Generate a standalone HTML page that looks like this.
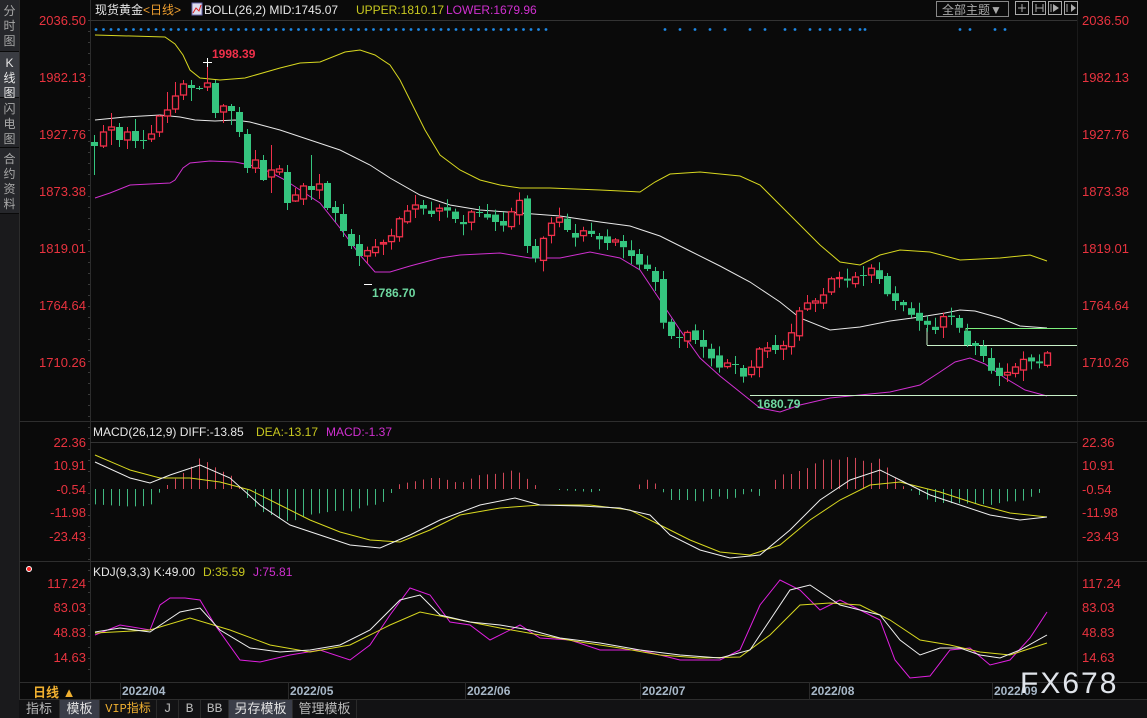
<!DOCTYPE html>
<html><head><meta charset="utf-8"><style>
*{margin:0;padding:0;box-sizing:border-box}
body{width:1147px;height:718px;background:#0a0a0a;overflow:hidden;font-family:"Liberation Sans","Noto Sans CJK SC",sans-serif;position:relative}
#side{position:absolute;left:0;top:0;width:19px;height:718px;background:#1a1a1c}
.st{position:absolute;left:0;width:19px;background:#26272b;color:#a8a8a8;font-size:12px;line-height:15px;text-align:center;border-bottom:1px solid #0a0a0a;padding-top:4px}
.st.sel{background:#3a3c42;color:#e8e8e8}
svg{position:absolute;left:0;top:0}
.tabs{position:absolute;left:19px;top:700px;height:18px;width:1128px;background:#121214;font-size:13px;color:#b8b8b8}
.tabs span{position:absolute;top:0;height:18px;line-height:18px;text-align:center;border-right:1px solid #2a2a2a;white-space:nowrap;overflow:hidden}
.tabs .hl{background:#3a3d48;color:#e0e0e0}
</style></head><body>
<div id="side">
<div class="st" style="top:0;height:52px">分<br>时<br>图</div>
<div class="st sel" style="top:52px;height:46px">K<br>线<br>图</div>
<div class="st" style="top:98px;height:50px">闪<br>电<br>图</div>
<div class="st" style="top:148px;height:66px">合<br>约<br>资<br>料</div>
</div>
<svg id="g" width="1147" height="718" xmlns="http://www.w3.org/2000/svg" font-family="Liberation Sans, Noto Sans CJK SC, sans-serif"></svg>
<div class="tabs">
<span style="left:0;width:41px">指标</span>
<span class="hl" style="left:41px;width:40px">模板</span>
<span style="left:81px;width:57px;color:#f0b030;font-size:12px;font-family:'Liberation Mono','Noto Sans CJK SC',monospace">VIP指标</span>
<span style="left:138px;width:22px;font-family:'Liberation Mono',monospace">J</span>
<span style="left:160px;width:22px;font-family:'Liberation Mono',monospace">B</span>
<span style="left:182px;width:28px;font-family:'Liberation Mono',monospace">BB</span>
<span class="hl" style="left:210px;width:64px">另存模板</span>
<span style="left:274px;width:64px">管理模板</span>
</div>
<script>
var s='';
function L(x1,y1,x2,y2,c,w,d){s+='<line x1="'+x1+'" y1="'+y1+'" x2="'+x2+'" y2="'+y2+'" stroke="'+c+'" stroke-width="'+(w||1)+'"'+(d?' stroke-dasharray="'+d+'"':'')+'/>';}
function T(x,y,t,c,sz,a,extra){s+='<text x="'+x+'" y="'+y+'" fill="'+c+'" font-size="'+(sz||12)+'"'+(a?' text-anchor="'+a+'"':'')+(extra||'')+'>'+t+'</text>';}
function P(pts,c){s+='<polyline fill="none" stroke="'+c+'" stroke-width="1" points="'+pts.map(function(p){return p.join(',')}).join(' ')+'"/>';}
L(19.5,0,19.5,700,'#2c2c2c');L(90.5,0,90.5,682,'#2c2c2c');L(1077.5,0,1077.5,682,'#1a1a1a');
[421.5,561.5,682.5,699.5].forEach(function(y){L(19,y,1147,y,'#2e2e2e');});
for(var y=20;y<680;y+=11){L(88,y+.5,90,y+.5,'#3a3a3a');}
var main=[[20,'2036.50'],[77,'1982.13'],[134,'1927.76'],[191,'1873.38'],[248,'1819.01'],[305,'1764.64'],[362,'1710.26']];
var macd=[[442,'22.36'],[465,'10.91'],[489,'-0.54'],[512,'-11.98'],[536,'-23.43']];
var kdj=[[583,'117.24'],[607,'83.03'],[632,'48.83'],[657,'14.63']];
main.concat(macd,kdj).forEach(function(m){T(86,m[0]+5,m[1],'#e8333f',13,'end');T(1082,m[0]+5,m[1],'#e8333f',13);});
L(90,20.5,1077,20.5,'#333','2,3');L(90,442.5,1077,442.5,'#333','2,3');
var dx=[];for(var x=96;x<=546;x+=7.5)dx.push(x);
[665,680,695,710,725,750,765,785,795,810,820,830,840,850,860,865,960,970,995,1005].forEach(function(x){dx.push(x)});
dx.forEach(function(x){s+='<circle cx="'+x+'" cy="29.5" r="1.4" fill="#1e88e5"/>';});
T(95,14,'现货黄金','#e8e8e8',12);T(143,14,'&lt;日线&gt;','#f0a030',12);
s+='<rect x="192" y="3" width="10" height="12" fill="#dde" stroke="#66a"/><polyline points="193,13 196,8 199,11 201,5" fill="none" stroke="#d22" stroke-width="1"/>';
T(204,14,'BOLL(26,2) MID:1745.07','#e8e8e8',12);T(356,14,'UPPER:1810.17','#c8c820',12);T(446,14,'LOWER:1679.96','#d030d0',12);
s+='<rect x="936.5" y="1.5" width="72" height="15" fill="none" stroke="#888"/>';T(942,14,'全部主题▼','#aaa',12);
[1015,1032,1048,1064].forEach(function(x){s+='<rect x="'+(x+.5)+'" y="1.5" width="13" height="13" fill="none" stroke="#aaa"/>';});
L(1018,8,1026,8,'#aaa');L(1022,4,1022,12,'#aaa');
L(1036,4,1036,12,'#aaa');L(1043,4,1043,12,'#aaa');L(1036,8,1043,8,'#aaa');
L(1051,4,1051,12,'#aaa');s+='<polygon points="1053,4 1059,8 1053,12" fill="#aaa"/>';
L(1067,4,1067,12,'#aaa');s+='<polygon points="1071,4 1076,8 1071,12" fill="#aaa"/>';
P([[95,35],[165,37],[175,44],[183,55],[190,70],[200,78],[220,80],[245,78],[280,68],[300,63],[320,62],[345,52],[360,50],[375,55],[390,65],[400,80],[410,100],[425,130],[440,155],[460,170],[480,180],[500,185],[520,188],[550,188],[600,190],[640,192],[655,182],[670,174],[700,172],[740,176],[760,185],[780,205],[800,225],[820,245],[840,262],[860,265],[880,255],[900,250],[930,252],[960,260],[1000,258],[1030,255],[1047,261]],'#d8d820');
P([[95,120],[125,117],[160,115],[180,117],[195,120],[215,121],[235,120],[250,122],[280,130],[310,140],[340,150],[370,165],[390,178],[420,195],[450,205],[480,210],[520,213],[560,216],[600,222],[630,226],[660,236],[690,251],[720,266],[750,282],[780,302],[800,318],[830,330],[860,327],[890,321],[920,317],[945,313],[960,310],[975,311],[1000,318],[1020,326],[1047,328]],'#e8e8e8');
P([[95,198],[110,193],[130,185],[170,183],[175,180],[183,168],[190,163],[210,161],[235,162],[250,165],[270,172],[285,180],[300,190],[320,203],[340,228],[360,255],[375,272],[390,272],[410,266],[440,258],[460,255],[500,253],[530,258],[560,258],[590,252],[620,258],[640,270],[660,300],[680,330],[700,358],[720,376],[740,392],[760,408],[780,412],[800,405],[830,398],[860,395],[890,392],[920,385],[940,372],[955,362],[970,358],[985,364],[1005,378],[1025,390],[1047,396]],'#d030d0');
L(966,328.5,1077,328.5,'#7ef07e');L(927,345.5,1077,345.5,'#c8f0c8');L(927,328,927,345,'#c8f0c8');L(966,328,966,345,'#7ef07e');L(750,395.5,1077,395.5,'#c8f0c8');
var G='#35c57f',R='#f0304a';
var c0=[[94,142,146,135,175],[103,146,132,125,148],[111,130,127,113,145],[119,127,140,123,147],[127,140,132,127,149],[135,131,141,119,148],[143,140,140,130,149],[151,139,134,125,142],[159,132,116,115,137],[167,116,110,92,123],[175,109,96,82,113],[183,95,84,80,100],[191,85,88,80,101],[199,88,88,86,90],[207,87,83,62,91],[215,83,113,80,118],[223,112,106,104,123],[231,106,111,104,125],[239,112,132,107,137],[247,134,168,129,173],[255,168,160,150,173],[263,160,180,155,181],[271,177,170,145,193],[279,172,169,165,175],[287,172,203,165,210],[295,201,195,188,202],[303,199,186,183,205],[311,186,190,155,200],[319,190,184,174,199],[327,183,208,181,210]];
var coarse=[[327,208],[335,215],[345,235],[355,250],[365,255],[375,248],[385,240],[395,228],[405,215],[415,205],[425,207],[435,212],[445,210],[455,218],[465,222],[475,212],[485,217],[495,220],[505,222],[515,210],[522,195],[527,245],[537,258],[547,232],[557,215],[567,228],[577,235],[587,233],[597,238],[607,240],[617,245],[627,252],[637,262],[647,265],[657,290],[665,335],[675,335],[685,335],[695,342],[705,348],[715,362],[725,366],[735,366],[745,378],[755,355],[765,350],[775,350],[785,342],[795,320],[805,305],[815,300],[825,290],[835,278],[845,282],[855,275],[865,270],[875,272],[885,292],[895,298],[905,312],[915,320],[925,322],[935,326],[945,318],[955,318],[965,340],[975,350],[985,360],[995,378],[1005,368],[1015,370],[1025,358],[1035,362],[1047,357]];
function itp(x){for(var i=0;i<coarse.length-1;i++){if(x>=coarse[i][0]&&x<=coarse[i+1][0]){var a=coarse[i],b=coarse[i+1];return a[1]+(b[1]-a[1])*(x-a[0])/(b[0]-a[0]);}}return coarse[coarse.length-1][1];}
var prev=208,i=0;
for(var x=335;x<=1047;x+=8){i++;var c=itp(x)+((i*29)%9-4);var o=prev+((i*37)%7-3);
 var hi=Math.min(o,c)-(2+(i*13)%9),lo=Math.max(o,c)+(2+(i*7)%10);c0.push([x,o,c,hi,lo]);prev=c;}
c0.forEach(function(k){var x=k[0],o=k[1],c=k[2],up=c<o;var col=up?R:G;var t=Math.min(o,c),b=Math.max(o,c);if(b-t<1)b=t+1;
 L(x+.5,k[3],x+.5,t,col);L(x+.5,b,x+.5,k[4],col);
 if(up)s+='<rect x="'+(x-2.5)+'" y="'+t+'" width="6" height="'+(b-t)+'" fill="#0a0a0a" stroke="'+col+'" stroke-width="1.3"/>';
 else s+='<rect x="'+(x-3)+'" y="'+t+'" width="7" height="'+(b-t)+'" fill="'+col+'"/>';});
L(203,62.5,212,62.5,'#fff');L(207.5,58,207.5,67,'#fff');T(212,58,'1998.39','#f0304a',12,null,' font-weight="bold"');
L(364,284.5,372,284.5,'#fff');T(372,297,'1786.70','#6ed8a0',12,null,' font-weight="bold"');
T(757,408,'1680.79','#6ed8a0',12,null,' font-weight="bold"');
T(93,436,'MACD(26,12,9) DIFF:-13.85','#e8e8e8',12);T(256,436,'DEA:-13.17','#c8c820',12);T(326,436,'MACD:-1.37','#d030d0',12);
var diff=[[95,462],[130,478],[150,483],[170,475],[200,465],[230,478],[260,505],[290,525],[320,535],[350,545],[380,548],[410,535],[440,520],[480,505],[515,498],[540,505],[580,506],[620,508],[650,515],[670,535],[700,550],[730,558],[760,555],[790,530],[820,500],[850,480],[880,470],[900,480],[930,495],[960,505],[990,515],[1020,520],[1047,517]];
var dea=[[95,455],[130,470],[160,478],[190,478],[220,482],[250,490],[280,505],[310,520],[340,532],[370,540],[400,542],[430,530],[460,515],[500,508],[540,505],[590,505],[630,510],[660,525],[690,540],[720,552],[750,555],[780,545],[810,520],[840,500],[870,485],[900,482],[940,492],[980,505],[1010,513],[1047,517]];
function ip(arr,x){for(var i=0;i<arr.length-1;i++){if(x>=arr[i][0]&&x<=arr[i+1][0]){return arr[i][1]+(arr[i+1][1]-arr[i][1])*(x-arr[i][0])/(arr[i+1][0]-arr[i][0]);}}return arr[arr.length-1][1];}
for(var x=95;x<=1047;x+=8){var h=(ip(dea,x)-ip(diff,x))*2.2;if(Math.abs(h)<1)continue;var col=h>0?'#d04858':'#40b880';L(x+.5,489,x+.5,489-h,col);}
P(dea,'#d8d820');P(diff,'#f0f0f0');
s+='<circle cx="29" cy="569" r="2.5" fill="#f22" stroke="#fff" stroke-width="1"/>';
T(93,576,'KDJ(9,3,3) K:49.00','#e8e8e8',12);T(203,576,'D:35.59','#c8c820',12);T(253,576,'J:75.81','#d030d0',12);
P([[95,635],[120,625],[150,630],[160,605],[170,598],[185,598],[200,600],[215,625],[240,660],[260,662],[290,655],[320,650],[350,660],[370,645],[390,615],[410,588],[430,595],[450,622],[470,625],[490,640],[520,625],[540,638],[570,640],[600,650],[640,650],[660,655],[680,660],[720,660],[740,650],[760,605],[780,580],[800,590],[820,610],[840,600],[860,610],[880,620],[895,660],[910,678],[930,676],[950,650],[970,648],[990,665],[1010,660],[1030,638],[1047,612]],'#e020e0');
P([[95,633],[150,630],[190,618],[230,630],[270,645],[310,652],[350,645],[390,625],[420,612],[460,620],[500,628],[540,635],[580,642],[620,648],[660,655],[700,658],[740,657],[770,635],[800,605],[830,603],[860,605],[890,620],[920,640],[950,645],[980,652],[1010,655],[1047,643]],'#d8d820');
P([[95,632],[120,628],[150,632],[180,612],[200,608],[220,630],[250,648],[280,652],[310,650],[340,645],[370,630],[400,600],[420,595],[440,615],[470,622],[500,625],[530,630],[560,638],[600,643],[640,650],[680,655],[720,658],[750,650],[770,620],[790,590],[810,585],[840,605],[860,610],[880,615],[900,640],[920,655],[940,648],[960,648],[980,655],[1000,658],[1020,650],[1047,635]],'#f0f0f0');
T(33,697,'日线 ▲','#f0b030',13,null,' font-weight="bold"');
L(90.5,682,90.5,700,'#2c2c2c');
[[120,'2022/04'],[288,'2022/05'],[465,'2022/06'],[640,'2022/07'],[809,'2022/08'],[992,'2022/09']].forEach(function(d){L(d[0]+.5,682,d[0]+.5,700,'#2a2a2a');T(d[0]+2,695,d[1],'#a8b8c8',12,null,' font-weight="bold"');});
T(1020,693,'FX678','#e0e4ea',30,null,' letter-spacing="2"');
document.getElementById('g').innerHTML=s;
</script>
</body></html>
